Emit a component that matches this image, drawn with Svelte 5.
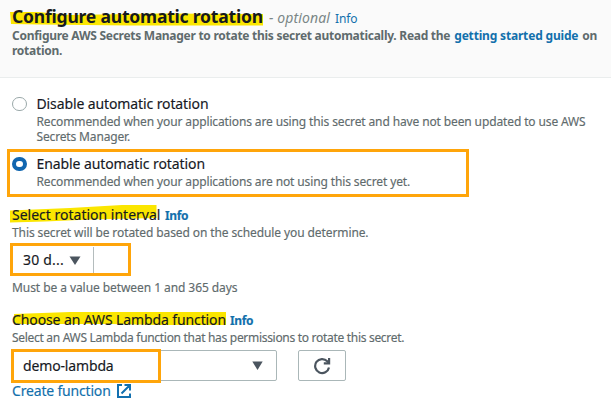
<script>
  let enabled = $state(true);
</script>

<main>
  <header>
    <h1>
      <span class="marked title">
        <svg class="mark" width="254" height="14" viewBox="0 0 254 14" style:top="8px"><path d="M0 0H28L60 3L150 1.5L253 2V13.500H120L30 12.5L1 12Z" /></svg>
        <span class="txt">Configure automatic rotation</span>
      </span>
      <em>- optional</em>
      <a class="light">Info</a>
    </h1>
    <p class="desc">
      <span>Configure AWS Secrets Manager to rotate this secret automatically. Read the</span>
      <a class="guide">getting started guide</a>
      <span>on</span>
    </p>
    <p class="desc">rotation.</p>
  </header>

  <section class="options">
    <button class="option" onclick={() => (enabled = false)}>
      <i class="radio" class:on={!enabled}></i>
      <span>
        <b class="l1">Disable automatic rotation</b>
        <small>Recommended when your applications are using this secret and have not been updated to use AWS</small>
        <small class="mgr">Secrets Manager.</small>
      </span>
    </button>
    <button class="option" onclick={() => (enabled = true)}>
      <i class="radio" class:on={enabled}></i>
      <span>
        <b class="l2">Enable automatic rotation</b>
        <small>Recommended when your applications are not using this secret yet.</small>
      </span>
      <i class="frame big"></i>
    </button>
  </section>

  <section class="interval">
    <div class="label">
      <span class="marked interval-name">
        <svg class="mark" width="148" height="19" viewBox="0 0 148 19" style:top="-1px"><path d="M0 6.5L60 4L112 1L146.500 1V14L80 15.500L35 17.500L0 18.500Z" /></svg>
        <span class="txt">Select rotation interval</span>
      </span>
      <a>Info</a>
    </div>
    <small class="sched">This secret will be rotated based on the schedule you determine.</small>
    <div class="days">
      <span class="value">30 d...</span>
      <svg width="12" height="9" viewBox="0 0 12 9"><path d="M.5.5h11L6 9Z" fill="#4b555f" /></svg>
      <i class="divider"></i>
      <i class="frame small"></i>
    </div>
    <small class="hint">Must be a value between 1 and 365 days</small>
  </section>

  <section class="lambda">
    <div class="label">
      <span class="marked lambda-name">
        <svg class="mark" width="216" height="13" viewBox="0 0 216 13" style:top="2px"><path d="M4 2L60 0H216V13H150L100 12H8L4 11Z" /></svg>
        <span class="txt">Choose an AWS Lambda function</span>
      </span>
      <a>Info</a>
    </div>
    <small class="perm">Select an AWS Lambda function that has permissions to rotate this secret.</small>
    <div class="row">
      <div class="select">
        <span>demo-lambda</span>
        <svg width="11" height="9" viewBox="0 0 11 9"><path d="M.3.5h10.400L5.500 9Z" fill="#4b555f" /></svg>
        <i class="frame medium"></i>
      </div>
      <button class="refresh" aria-label="Refresh">
        <svg width="18" height="18" viewBox="0 0 18 18" fill="none" stroke="#4b555f" stroke-width="2.200">
          <path d="M16 10.500A7 7 0 1 1 14.300 4.300L16 6" />
          <path d="M16.100 1V6.300H10.800" />
        </svg>
      </button>
    </div>
    <a class="create">
      <span>Create function</span>
      <svg width="16" height="16" viewBox="0 0 16 16" fill="none" stroke="#1270b0" stroke-width="2">
        <path d="M6 2H2V14H14V10.500M8.500 2H14V7.500M14 2L5.500 10.500" />
      </svg>
    </a>
  </section>
</main>

<style>
  :global(body) { background: #fff; }
  main {
    width: 611px;
    height: 406px;
    overflow: hidden;
    box-sizing: border-box;
    font-family: "Noto Sans", "Open Sans", sans-serif;
    font-size: 14px;
    line-height: 20px;
    color: #16191f;
    white-space: nowrap;
    -webkit-text-stroke: .15px;
  }
  header {
    height: 78px;
    box-sizing: border-box;
    padding: 4px 0 0 12px;
    background: #fafafa;
    border-bottom: 1px solid #eaeded;
    -webkit-text-stroke: 0;
  }
  h1, p { margin: 0; }
  h1 { display: flex; align-items: baseline; height: 24px; line-height: 24px; }
  h1 em { width: 66px; font-size: 14px; font-weight: 400; letter-spacing: .12px; color: #7b8787; }
  a { color: #1270ac; }
  a.light { font-size: 12px; font-weight: 400; letter-spacing: -.15px; }
  .marked { position: relative; flex: none; }
  .mark { position: absolute; left: -2px; fill: #fbe600; }
  .txt { position: relative; }
  .title { width: 257px; font-size: 17.5px; letter-spacing: -.2px; }
  .desc {
    display: flex;
    gap: 4px;
    height: 15px;
    font-size: 12px;
    line-height: 15px;
    font-weight: 700;
    letter-spacing: -.27px;
    color: #5f6b6d;
  }
  .guide { letter-spacing: -.18px; }
  .options { display: flex; flex-direction: column; gap: 10px; padding: 16px 0 0 12px; }
  button { font: inherit; color: inherit; text-align: left; padding: 0; margin: 0; border: 0; background: none; }
  .option { position: relative; display: flex; gap: 10px; }
  .radio {
    flex: none;
    box-sizing: border-box;
    width: 14.5px;
    height: 14.5px;
    margin-top: 2.500px;
    border: 1px solid #9ba9aa;
    border-radius: 50%;
    background: #fff;
  }
  .radio.on { border: 4.500px solid #1166b0; }
  b { display: block; font-weight: 400; }
  .l1 { letter-spacing: -.11px; }
  .l2 { letter-spacing: -.09px; }
  small { display: block; font-size: 12px; line-height: 15px; letter-spacing: -.125px; color: #5f6b6d; }
  .mgr { letter-spacing: -.15px; }
  .frame { position: absolute; box-sizing: border-box; border: 3px solid #ffa50a; }
  .big { left: -5px; top: -5px; width: 462px; height: 48px; }
  .interval { padding: 16px 0 0 12px; }
  .label { display: flex; align-items: baseline; height: 20px; }
  .label a { font-size: 12px; font-weight: 700; letter-spacing: -.35px; }
  .interval-name { width: 153px; }
  .lambda-name { width: 218px; letter-spacing: -.11px; }
  .sched { letter-spacing: -.1px; }
  .days {
    position: relative;
    display: flex;
    align-items: center;
    box-sizing: border-box;
    width: 118px;
    height: 30px;
    margin: 5px 0 5px;
    padding-left: 10px;
    border: 1px solid #c5cccd;
  }
  .value { width: 46px; letter-spacing: .2px; }
  .divider { width: 1px; height: 27px; margin-left: 12px; background: #b4bcbd; }
  .small { left: -3px; top: -3px; width: 121px; height: 33px; }
  .hint { letter-spacing: -.07px; }
  .lambda { padding: 15px 0 0 12px; }
  .perm { letter-spacing: -.3px; }
  .row { display: flex; gap: 21px; margin-top: 5px; }
  .select {
    position: relative;
    display: flex;
    align-items: center;
    justify-content: space-between;
    box-sizing: border-box;
    width: 265px;
    height: 31px;
    padding: 0 13px 0 10px;
    border: 1px solid #aab7b8;
    border-radius: 2px;
    letter-spacing: -.15px;
  }
  .medium { left: -2px; top: -2px; width: 150px; height: 34px; }
  .refresh {
    display: flex;
    align-items: center;
    justify-content: center;
    box-sizing: border-box;
    width: 48px;
    height: 31px;
    border: 1px solid #aab7b8;
    border-radius: 2px;
  }
  .create { display: flex; align-items: center; gap: 5px; height: 20px; letter-spacing: -.18px; }
</style>
